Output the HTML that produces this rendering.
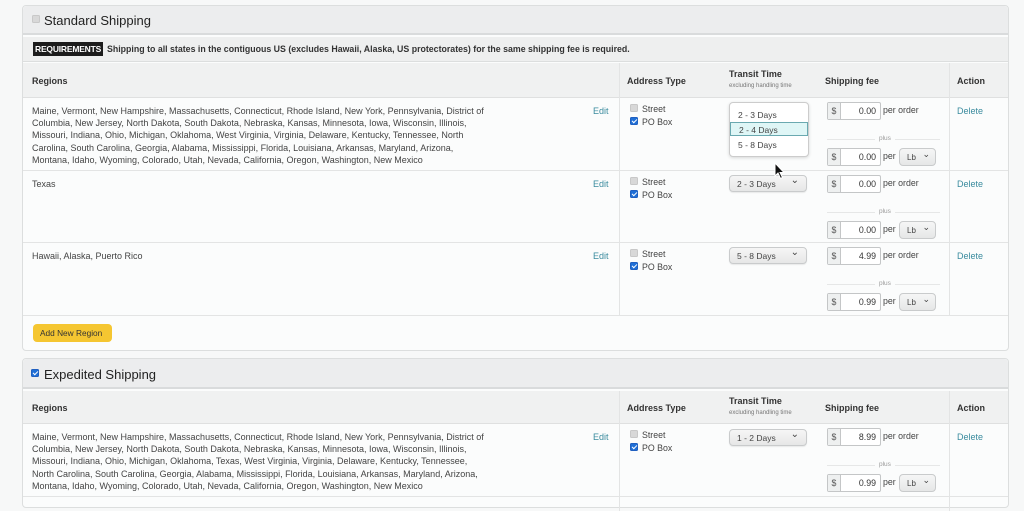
<!DOCTYPE html><html><head><style>
*{box-sizing:border-box;margin:0;padding:0}
body{width:1024px;height:501px;overflow:hidden;background:#f7f8f8;font-family:"Liberation Sans",sans-serif;position:relative;color:#333}
.a{position:absolute}
.panel{position:absolute;left:22px;width:987px;border:1px solid #dcdede;border-radius:4px;background:#fbfcfc}
.hdr{position:absolute;left:0;right:0;background:#ecedee;border-bottom:2px solid #d9dbdc}
.ttl{position:absolute;left:21px;font-size:13px;color:#222}
.cb{position:absolute;width:8px;height:8px;border-radius:1.5px;background:#d8d8d8;border:1px solid #c8c8c8}
.cb.on{background:#1f6fd6;border-color:#1f5fc0}
.cb.on::after{content:"";position:absolute;left:2px;top:0px;width:2px;height:4px;border:solid #fff;border-width:0 1.3px 1.3px 0;transform:rotate(45deg)}
.th{position:absolute;left:0;right:0;background:#f0f1f1;border-bottom:1px solid #dfe0e0;font-size:9px;font-weight:bold;color:#333}
.th span{position:absolute}
.vl{position:absolute;width:1px;background:#e3e4e4}
.row{position:absolute;left:0;right:0;border-bottom:1px solid #e3e4e4;font-size:8.3px}
.reg{position:absolute;left:9px;top:7px;width:458px;line-height:12.2px;color:#444;font-size:9px}
.edit{position:absolute;left:570px;top:8px;color:#3a8b9e;font-size:9px}
.del{position:absolute;left:934px;top:8px;color:#3a8b9e;font-size:9px}
.lbl{position:absolute;left:619px;font-size:8.8px;color:#444}
.sel{position:absolute;left:706px;width:78px;height:17px;border:1px solid #c9cbcc;border-radius:4px;background:linear-gradient(#f6f6f6,#e6e7e7);font-size:8.5px;padding:3px 0 0 7px;color:#444;box-shadow:0 1px 1px rgba(0,0,0,.08)}
.sel::after{content:"⌄";position:absolute;right:7px;top:-1px;font-size:10px}
.box{position:absolute;left:804px;width:54px;height:18px;border:1px solid #c4c6c7;border-radius:2px;background:#fff;font-size:8.8px}
.box b{position:absolute;left:0;top:0;width:13px;height:16px;background:#eef0f0;border-right:1px solid #c4c6c7;font-weight:normal;text-align:center;padding-top:3px;color:#555}
.box i{position:absolute;right:4px;top:3px;font-style:normal;color:#333}
.pt{position:absolute;left:860px;font-size:8.8px;color:#444}
.lb{position:absolute;left:876px;width:37px;height:18px;border:1px solid #c9cbcc;border-radius:4px;background:linear-gradient(#f6f6f6,#e6e7e7);font-size:8px;padding:4px 0 0 7px;color:#444}
.lb::after{content:"⌄";position:absolute;right:5px;top:0px;font-size:9px}
.plus{position:absolute;left:804px;width:113px;height:1px;background:#e6e7e7}
.plus span{position:absolute;left:48px;top:-4px;background:#fbfcfc;padding:0 4px;font-size:6.5px;color:#999}
</style></head><body>

<div class="panel" style="top:5px;height:346px">
 <div class="hdr" style="top:0;height:29px;border-radius:4px 4px 0 0"></div>
 <div class="cb" style="left:9px;top:9px"></div>
 <div class="ttl" style="top:7px">Standard Shipping</div>
 <div class="a" style="left:0;right:0;top:31px;height:25px;background:#eeefef;border-bottom:1px solid #dcdede"></div>
 <div class="a" style="left:10px;top:36px;background:#1c1c1c;color:#fff;font-size:8.5px;font-weight:bold;padding:2px 2px;letter-spacing:-.2px">REQUIREMENTS</div>
 <div class="a" style="left:84px;top:38px;font-size:8.8px;font-weight:bold;color:#333">Shipping to all states in the contiguous US (excludes Hawaii, Alaska, US protectorates) for the same shipping fee is required.</div>
 <div class="th" style="top:57px;height:35px"><span style="left:9px;top:13px">Regions</span><span style="left:604px;top:13px">Address Type</span><span style="left:706px;top:6px">Transit Time</span><span style="left:706px;top:20px;font-size:6px;font-weight:normal;color:#777">excluding handling time</span><span style="left:802px;top:13px">Shipping fee</span><span style="left:934px;top:13px">Action</span></div>
 <div class="vl" style="left:596px;top:57px;height:253px"></div>
 <div class="vl" style="left:926px;top:57px;height:253px"></div>

 <div class="row" style="top:92px;height:73px">
  <div class="reg">Maine, Vermont, New Hampshire, Massachusetts, Connecticut, Rhode Island, New York, Pennsylvania, District of Columbia, New Jersey, North Dakota, South Dakota, Nebraska, Kansas, Minnesota, Iowa, Wisconsin, Illinois, Missouri, Indiana, Ohio, Michigan, Oklahoma, West Virginia, Virginia, Delaware, Kentucky, Tennessee, North Carolina, South Carolina, Georgia, Alabama, Mississippi, Florida, Louisiana, Arkansas, Maryland, Arizona, Montana, Idaho, Wyoming, Colorado, Utah, Nevada, California, Oregon, Washington, New Mexico</div>
  <div class="edit">Edit</div>
  <div class="cb" style="left:607px;top:6px"></div><div class="lbl" style="top:6px">Street</div>
  <div class="cb on" style="left:607px;top:19px"></div><div class="lbl" style="top:19px">PO Box</div>
  <div class="a" style="left:706px;top:4px;width:80px;height:55px;background:#fff;border:1px solid #ccc;border-radius:4px;box-shadow:0 1px 3px rgba(0,0,0,.15);font-size:8.5px;color:#444">
   <div class="a" style="left:8px;top:7px">2 - 3 Days</div>
   <div class="a" style="left:0;top:19px;width:78px;height:14px;background:#dff6f6;border:1px solid #6aa9b0;padding:2px 0 0 8px">2 - 4 Days</div>
   <div class="a" style="left:8px;top:37px">5 - 8 Days</div>
  </div>
  <div class="box" style="top:4px"><b>$</b><i>0.00</i></div><div class="pt" style="top:7px">per order</div>
  <div class="plus" style="top:41px"><span>plus</span></div>
  <div class="box" style="top:50px"><b>$</b><i>0.00</i></div><div class="pt" style="top:53px">per</div><div class="lb" style="top:50px">Lb</div>
  <div class="del">Delete</div>
 </div>

 <div class="row" style="top:165px;height:72px">
  <div class="reg">Texas</div>
  <div class="edit">Edit</div>
  <div class="cb" style="left:607px;top:6px"></div><div class="lbl" style="top:6px">Street</div>
  <div class="cb on" style="left:607px;top:19px"></div><div class="lbl" style="top:19px">PO Box</div>
  <div class="sel" style="top:4px">2 - 3 Days</div>
  <div class="box" style="top:4px"><b>$</b><i>0.00</i></div><div class="pt" style="top:7px">per order</div>
  <div class="plus" style="top:41px"><span>plus</span></div>
  <div class="box" style="top:50px"><b>$</b><i>0.00</i></div><div class="pt" style="top:53px">per</div><div class="lb" style="top:50px">Lb</div>
  <div class="del">Delete</div>
 </div>
 <svg class="a" style="left:751px;top:156px" width="12" height="18" viewBox="0 0 12 18"><path d="M1 1 L1 14 L4 11 L6.5 16.5 L8.5 15.5 L6 10.5 L10 10.5 Z" fill="#111" stroke="#fff" stroke-width="1"/></svg>

 <div class="row" style="top:237px;height:73px">
  <div class="reg">Hawaii, Alaska, Puerto Rico</div>
  <div class="edit">Edit</div>
  <div class="cb" style="left:607px;top:6px"></div><div class="lbl" style="top:6px">Street</div>
  <div class="cb on" style="left:607px;top:19px"></div><div class="lbl" style="top:19px">PO Box</div>
  <div class="sel" style="top:4px">5 - 8 Days</div>
  <div class="box" style="top:4px"><b>$</b><i>4.99</i></div><div class="pt" style="top:7px">per order</div>
  <div class="plus" style="top:41px"><span>plus</span></div>
  <div class="box" style="top:50px"><b>$</b><i>0.99</i></div><div class="pt" style="top:53px">per</div><div class="lb" style="top:50px">Lb</div>
  <div class="del">Delete</div>
 </div>
 <div class="a" style="left:10px;top:318px;width:79px;height:18px;background:#f5c631;border-radius:4px;font-size:8.3px;color:#333;padding:4px 0 0 7px">Add New Region</div>
</div>

<div class="panel" style="top:358px;height:150px">
 <div class="hdr" style="top:0;height:30px;border-radius:4px 4px 0 0"></div>
 <div class="cb on" style="left:8px;top:10px"></div>
 <div class="ttl" style="top:8px">Expedited Shipping</div>
 <div class="th" style="top:32px;height:33px"><span style="left:9px;top:12px">Regions</span><span style="left:604px;top:12px">Address Type</span><span style="left:706px;top:5px">Transit Time</span><span style="left:706px;top:19px;font-size:6px;font-weight:normal;color:#777">excluding handling time</span><span style="left:802px;top:12px">Shipping fee</span><span style="left:934px;top:12px">Action</span></div>
 <div class="vl" style="left:596px;top:32px;height:120px"></div>
 <div class="vl" style="left:926px;top:32px;height:120px"></div>
 <div class="row" style="top:65px;height:73px">
  <div class="reg">Maine, Vermont, New Hampshire, Massachusetts, Connecticut, Rhode Island, New York, Pennsylvania, District of Columbia, New Jersey, North Dakota, South Dakota, Nebraska, Kansas, Minnesota, Iowa, Wisconsin, Illinois, Missouri, Indiana, Ohio, Michigan, Oklahoma, Texas, West Virginia, Virginia, Delaware, Kentucky, Tennessee, North Carolina, South Carolina, Georgia, Alabama, Mississippi, Florida, Louisiana, Arkansas, Maryland, Arizona, Montana, Idaho, Wyoming, Colorado, Utah, Nevada, California, Oregon, Washington, New Mexico</div>
  <div class="edit">Edit</div>
  <div class="cb" style="left:607px;top:6px"></div><div class="lbl" style="top:6px">Street</div>
  <div class="cb on" style="left:607px;top:19px"></div><div class="lbl" style="top:19px">PO Box</div>
  <div class="sel" style="top:5px">1 - 2 Days</div>
  <div class="box" style="top:4px"><b>$</b><i>8.99</i></div><div class="pt" style="top:7px">per order</div>
  <div class="plus" style="top:41px"><span>plus</span></div>
  <div class="box" style="top:50px"><b>$</b><i>0.99</i></div><div class="pt" style="top:53px">per</div><div class="lb" style="top:50px">Lb</div>
  <div class="del">Delete</div>
 </div>
</div>
</body></html>
